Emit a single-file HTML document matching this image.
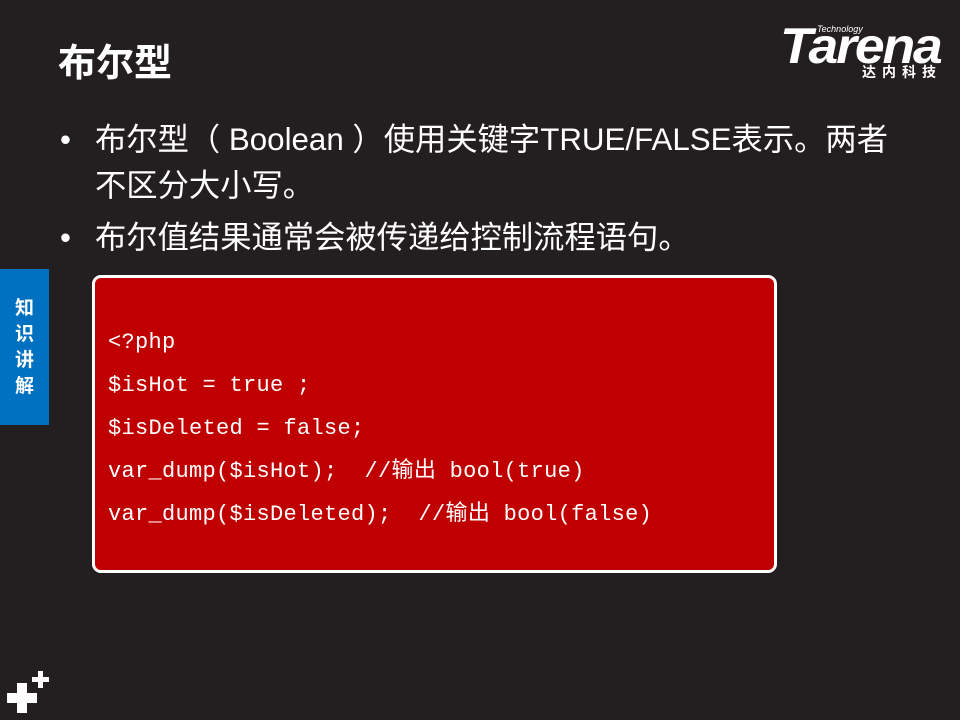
<!DOCTYPE html>
<html><head><meta charset="utf-8"><style>
body{margin:0;width:960px;height:720px;background:#231f20;position:relative;overflow:hidden;font-family:"Liberation Sans","Noto Sans CJK SC",sans-serif;color:#fff}
.a{position:absolute}
.t{left:58px;top:38px;font-size:38px;font-weight:bold;line-height:52px}
.b{left:60px;font-size:31.3px;line-height:46px;white-space:nowrap}
.b span{position:absolute;left:0}
.b div{margin-left:35px}
.tab{left:0;top:269px;width:49px;height:156px;background:#0070c0;font-weight:bold;font-size:19px;line-height:26px;text-align:center;padding-top:27px;box-sizing:border-box}
.code{left:92px;top:275px;width:685px;height:298px;box-sizing:border-box;border:3px solid #fff;border-radius:9px;background:#c00000;padding:43px 0 0 13px;font-family:"Liberation Mono","Noto Sans CJK SC",monospace;font-size:22px;line-height:43px;white-space:pre;letter-spacing:0.3px}
</style></head><body>
<div class="a t">布尔型</div>
<div class="a b" style="top:117px"><span>•</span><div>布尔型（ Boolean ）使用关键字TRUE/FALSE表示。两者<br>不区分大小写。</div></div>
<div class="a b" style="top:215px"><span>•</span><div>布尔值结果通常会被传递给控制流程语句。</div></div>
<div class="a tab">知<br>识<br>讲<br>解</div>
<div class="a code">&lt;?php
$isHot = true ;
$isDeleted = false;
var_dump($isHot);  //输出 bool(true)
var_dump($isDeleted);  //输出 bool(false)</div>
<div class="a" style="left:817px;top:24px;font-size:9px;font-style:italic">Technology</div>
<div class="a" style="left:780px;top:16px;font-size:50px;font-weight:bold;font-style:italic;letter-spacing:-2px;line-height:60px;transform:scaleX(1.07);transform-origin:left">Tarena</div>
<div class="a" style="left:862px;top:62px;font-size:14px;font-weight:bold;letter-spacing:6px">达内科技</div>
<div class="a" style="left:7px;top:693px;width:30px;height:10px;background:#fff"></div>
<div class="a" style="left:17px;top:683px;width:10px;height:30px;background:#fff"></div>
<div class="a" style="left:32px;top:677px;width:17px;height:5px;background:#fff"></div>
<div class="a" style="left:38px;top:671px;width:5px;height:17px;background:#fff"></div>
</body></html>
